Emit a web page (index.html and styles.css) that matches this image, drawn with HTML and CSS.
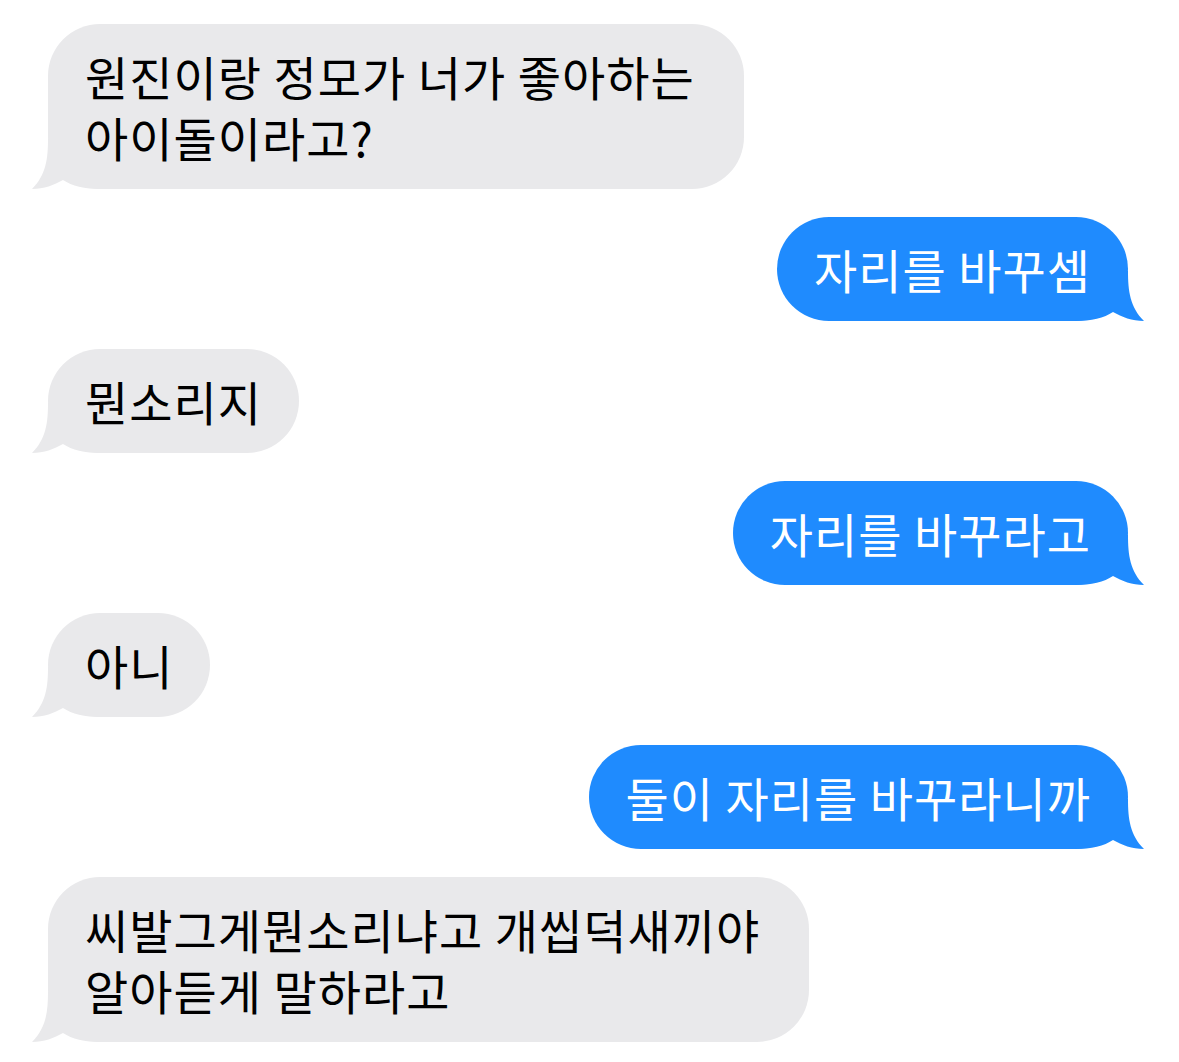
FILE: index.html
```html
<!doctype html>
<html>
<head>
  <title>Messages</title>
  <meta charset="utf-8">
  <link rel="stylesheet" href="styles.css">
</head>
<body>
  <div id="thread" class="thread">
    <div class="msg recv">
      <div class="bubble multi">원진이랑 정모가 너가 좋아하는<br>아이돌이라고?</div>
    </div>
    <div class="msg sent">
      <div class="bubble">자리를 바꾸셈</div>
    </div>
    <div class="msg recv">
      <div class="bubble">뭔소리지</div>
    </div>
    <div class="msg sent">
      <div class="bubble">자리를 바꾸라고</div>
    </div>
    <div class="msg recv">
      <div class="bubble">아니</div>
    </div>
    <div class="msg sent">
      <div class="bubble">둘이 자리를 바꾸라니까</div>
    </div>
    <div class="msg recv">
      <div class="bubble multi">씨발그게뭔소리냐고 개씹덕새끼야<br>알아듣게 말하라고</div>
    </div>
  </div>
  <script>
    // 말풍선 꼬리 붙이기
    const bubbles = document.querySelectorAll(".bubble");
    bubbles.forEach(function(b){
      const ns = "http://www.w3.org/2000/svg";
      const svg = document.createElementNS(ns, "svg");
      svg.setAttribute("class", "tail");
      svg.setAttribute("viewBox", "0 0 70 50");
      const path = document.createElementNS(ns, "path");
      path.setAttribute("d", "M16 0 C16 20 14 36 0 50 C12 50 22 46 31 41 C40 47 52 50 70 50 L70 0 Z");
      svg.appendChild(path);
      b.appendChild(svg);
    });
  </script>
</body>
</html>
```

FILE: styles.css
```css
body{
  margin:0;
  background:#fff;
  font-family:"Noto Sans CJK KR", "Noto Sans", sans-serif;
}
.thread{
  display:flex;
  flex-direction:column;
  gap:28px;
  padding:24px 51px 20px 48px;
}
.msg{
  display:flex;
}
.msg.sent{
  justify-content:flex-end;
}
.bubble{
  position:relative;
  z-index:0;
  font-size:47px;
  letter-spacing:1px;
  line-height:61px;
  padding:21px 37px 22px 37px;
  border-radius:52px;
  white-space:nowrap;
}
.bubble.multi{
  padding-right:49px;
}
.recv .bubble{
  background:#e9e9eb;
  color:#000;
}
.sent .bubble{
  background:#1f8bfe;
  color:#fff;
}
.tail{
  position:absolute;
  z-index:-1;
  bottom:0;
  width:70px;
  height:50px;
}
.recv .tail{
  left:-16px;
  fill:#e9e9eb;
}
.sent .tail{
  right:-16px;
  fill:#1f8bfe;
  transform:scaleX(-1);
}
```
